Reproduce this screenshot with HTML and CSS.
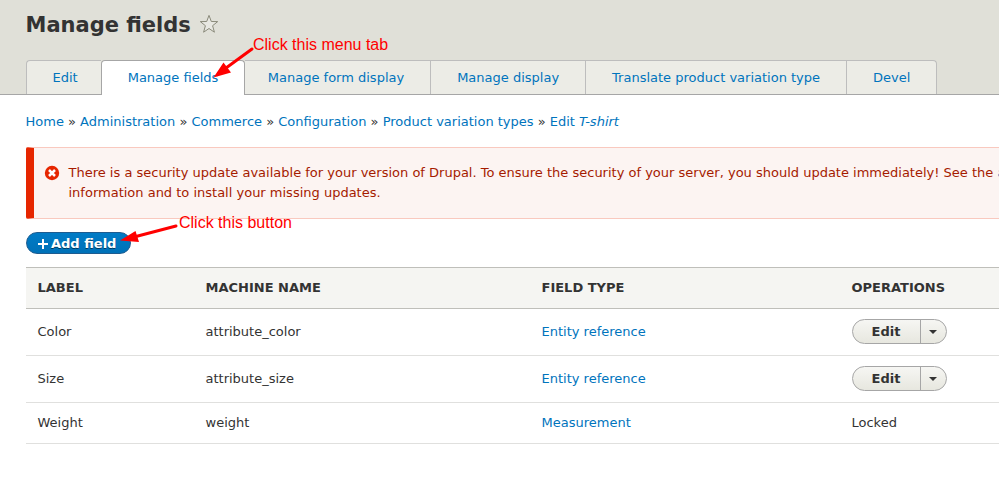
FILE: index.html
```
<!DOCTYPE html>
<html lang="en">
<head>
<meta charset="utf-8">
<title>Manage fields</title>
<link rel="stylesheet" href="styles.css">
</head>
<body>
<header class="page-header">
  <div class="title-row">
    <h1>Manage fields</h1>
    <svg class="star" width="20" height="20" viewBox="0 0 20 20"><path d="M10 1.4 12.3 7.5 18.7 7.6 13.6 11.7 15.4 18.2 10 14.5 4.6 18.2 6.4 11.7 1.3 7.6 7.7 7.5Z"/></svg>
  </div>
  <nav class="tabs">
    <a class="tab">Edit</a>
    <a class="tab active">Manage fields</a>
    <a class="tab">Manage form display</a>
    <a class="tab">Manage display</a>
    <a class="tab">Translate product variation type</a>
    <a class="tab">Devel</a>
  </nav>
</header>
<main>
  <nav class="breadcrumb"><a>Home</a> » <a>Administration</a> » <a>Commerce</a> » <a>Configuration</a> » <a>Product variation types</a> » <a>Edit <em>T-shirt</em></a></nav>
  <div class="message">
    <svg class="error-icon" width="16" height="16" viewBox="0 0 16 16"><circle cx="8" cy="8" r="7.2"/><path d="M5 5 11 11M11 5 5 11"/></svg>
    <p>There is a security update available for your version of Drupal. To ensure the security of your server, you should update immediately! See the <a>a</a><br>information and to install your missing updates.</p>
  </div>
  <a class="add-button"><svg width="10" height="10" viewBox="0 0 10 10"><path d="M5 0V10M0 5H10"/></svg><span>Add field</span></a>
  <table>
    <colgroup><col class="c-label"><col class="c-name"><col class="c-type"><col></colgroup>
    <thead><tr><th>Label</th><th>Machine name</th><th>Field type</th><th>Operations</th></tr></thead>
    <tbody>
      <tr><td>Color</td><td>attribute_color</td><td><a>Entity reference</a></td><td><div class="dropbutton"><span>Edit</span><i></i></div></td></tr>
      <tr><td>Size</td><td>attribute_size</td><td><a>Entity reference</a></td><td><div class="dropbutton"><span>Edit</span><i></i></div></td></tr>
      <tr class="locked"><td>Weight</td><td>weight</td><td><a>Measurement</a></td><td>Locked</td></tr>
    </tbody>
  </table>
</main>
<svg class="arrows" width="999" height="487" viewBox="0 0 999 487"><path class="shaft" d="M252 49 226 68M176 226 134 237"/><path class="head" d="M213.500 77.500 223.500 62.500 231 72.500ZM120 240.500 135.500 231 139 242Z"/></svg>
<span class="note note-tab">Click this menu tab</span>
<span class="note note-button">Click this button</span>
</body>
</html>
```
FILE: styles.css
```
* { box-sizing: border-box; }
body {
  margin: 0;
  position: relative;
  height: 487px;
  overflow: hidden;
  background: #fff;
  color: #333;
  font: 13px/20px "DejaVu Sans", sans-serif;
}
a { color: #0074bd; }
.page-header {
  height: 95px;
  padding-left: 26px;
  background: #e0e0d8;
  border-bottom: 1px solid #a6a6a6;
}
.title-row { display: flex; height: 60px; padding-top: 10px; }
h1 { margin: 0 0 0 -.5px; padding-top: 1px; font-size: 21px; line-height: 29px; }
.star { margin: 4px 0 0 8px; fill: #e8e8e2; stroke: #8a8a7a; stroke-width: 1; }
.tabs { display: flex; height: 35px; }
.tab {
  height: 34px;
  padding: 0 26px;
  line-height: 33px;
  background: #ecece6;
  border: 1px solid #bdbdbd;
  border-right: 0;
  border-bottom: 0;
  white-space: nowrap;
}
.tab:first-child { padding: 0 23px 0 25.5px; border-top-left-radius: 4px; }
.tab:last-child { border-right: 1px solid #bdbdbd; border-top-right-radius: 4px; }
.tab.active {
  height: 35px;
  background: #fff;
  border-right: 1px solid #a6a6a6;
  border-left-color: #a6a6a6;
  border-top-color: #a6a6a6;
  border-radius: 4px 4px 0 0;
}
.tab.active + .tab { padding-left: 22.5px; border-left: 0; }
main { padding-left: 26px; }
.breadcrumb { margin: 17px 0 0 -.5px; height: 35px; white-space: nowrap; }
.message {
  display: flex;
  height: 72px;
  padding: 15px 0 15px 10px;
  background: #fcf4f2;
  border: 1px solid #f9c9bf;
  border-left: 8px solid #e62600;
  border-right: 0;
  border-radius: 2px 0 0 2px;
  color: #a51b00;
  white-space: nowrap;
  overflow: hidden;
}
.message p { margin: 0 0 0 8.5px; }
.error-icon { flex: none; margin-top: 2px; fill: #e62600; }
.error-icon path { stroke: #fff; stroke-width: 2.5; }
.add-button {
  display: flex;
  align-items: center;
  width: 105px;
  height: 22px;
  margin: 13px 0;
  padding-left: 11px;
  border: 1px solid #1e5c90;
  border-radius: 11px;
  background: linear-gradient(#007bc6, #0071b8);
  color: #fff;
  font-weight: bold;
  text-shadow: 0 1px rgba(0, 0, 0, .5);
}
.add-button svg { margin: 1px 3px 0 0; stroke: #fff; stroke-width: 2; }
.add-button span { padding-top: 2px; }
table { width: 973px; border-collapse: separate; border-spacing: 0; table-layout: fixed; }
.c-label { width: 168px; }
.c-name { width: 336px; }
.c-type { width: 310px; }
th, td { padding: 0 0 0 11.5px; text-align: left; border-bottom: 1px solid #e0e0de; }
th {
  height: 42px;
  background: #f5f5f2;
  border-top: 1px solid #bfbfba;
  border-bottom-color: #bfbfba;
  text-transform: uppercase;
}
td { height: 47px; }
.locked td { height: 41px; }
.dropbutton {
  display: flex;
  width: 95px;
  height: 25px;
  margin-bottom: 1px;
  border: 1px solid #a6a6a6;
  border-radius: 13px;
  background: linear-gradient(#f6f6f3, #e7e7df);
  font-weight: bold;
  line-height: 23px;
}
.dropbutton span { width: 68px; padding-left: 19px; border-right: 1px solid #a6a6a6; }
.dropbutton i {
  width: 0;
  height: 0;
  margin: 10px 0 0 8px;
  border: 4px solid transparent;
  border-top-color: #333;
  border-bottom: 0;
}
.arrows { position: absolute; left: 0; top: 0; }
.shaft { stroke: #f00; stroke-width: 3; stroke-linecap: round; }
.head { fill: #f00; }
.note { position: absolute; color: #f00; font: 16px/18px "Liberation Sans", sans-serif; white-space: nowrap; }
.note-tab { left: 253px; top: 36px; }
.note-button { left: 179px; top: 214px; }
```
